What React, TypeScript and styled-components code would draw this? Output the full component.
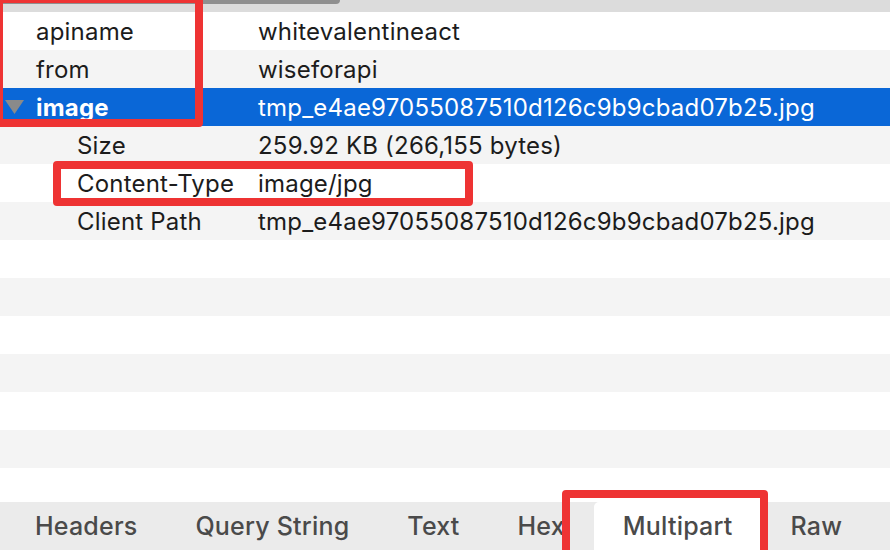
import React from "react";
import styled, { createGlobalStyle } from "styled-components";

const Global = createGlobalStyle`
  html, body { margin: 0; padding: 0; background: #ffffff; }
  body { font-family: Inter, "Noto Sans", "Liberation Sans", sans-serif; }
`;

const Page = styled.div`
  position: relative;
  width: 890px;
  height: 550px;
  overflow: hidden;
  display: flex;
  flex-direction: column;
  background: #ffffff;
`;

const TopStrip = styled.div`
  height: 12px;
  flex: none;
  background: #dcdcdc;
  display: flex;
  align-items: flex-start;
`;

const ScrollThumb = styled.div`
  width: 340px;
  height: 4px;
  background: #8f8f8f;
  border-bottom-right-radius: 4px;
`;

const Table = styled.div`
  flex: 1;
  display: flex;
  flex-direction: column;
`;

const Row = styled.div<{ $stripe?: boolean; $selected?: boolean }>`
  height: 38px;
  flex: none;
  display: grid;
  grid-template-columns: 258px 1fr;
  align-items: center;
  background: ${(p) => (p.$selected ? "#0a67d7" : p.$stripe ? "#f4f4f4" : "#ffffff")};
  color: ${(p) => (p.$selected ? "#ffffff" : "#1c1c1c")};
  font-size: 24px;
  letter-spacing: 0.2px;
`;

const KeyCell = styled.div<{ $indent: number; $bold?: boolean }>`
  position: relative;
  padding-left: ${(p) => p.$indent}px;
  font-weight: ${(p) => (p.$bold ? 700 : 400)};
  white-space: nowrap;
`;

const ValueCell = styled.div`
  white-space: nowrap;
`;

const Disclosure = styled.svg`
  position: absolute;
  left: 5px;
  top: 50%;
  margin-top: -8px;
`;

const Filler = styled.div<{ $stripe?: boolean }>`
  height: 38px;
  flex: none;
  background: ${(p) => (p.$stripe ? "#f4f4f4" : "#ffffff")};
`;

const TabBar = styled.div`
  height: 48px;
  flex: none;
  margin-top: auto;
  background: #ebebeb;
  display: flex;
  align-items: stretch;
  padding-left: 6px;
`;

const Tab = styled.div<{ $active?: boolean }>`
  padding: 0 29px;
  display: flex;
  align-items: center;
  font-size: 25px;
  font-weight: 500;
  letter-spacing: 0.2px;
  color: #4a4a4a;
  background: ${(p) => (p.$active ? "#ffffff" : "transparent")};
  border-top-left-radius: ${(p) => (p.$active ? "5px" : "0")};
  white-space: nowrap;
`;

const Annotation = styled.div<{ $x: number; $y: number; $w: number; $h: number }>`
  position: absolute;
  left: ${(p) => p.$x}px;
  top: ${(p) => p.$y}px;
  width: ${(p) => p.$w}px;
  height: ${(p) => p.$h}px;
  box-sizing: border-box;
  border: 8px solid #ee3333;
  border-radius: 4px;
  pointer-events: none;
`;

type Item = { key: string; value: string; indent: number; bold?: boolean; selected?: boolean; toggle?: boolean };

const items: Item[] = [
  { key: "apiname", value: "whitevalentineact", indent: 36 },
  { key: "from", value: "wiseforapi", indent: 36 },
  { key: "image", value: "tmp_e4ae97055087510d126c9b9cbad07b25.jpg", indent: 36, bold: true, selected: true, toggle: true },
  { key: "Size", value: "259.92 KB (266,155 bytes)", indent: 77 },
  { key: "Content-Type", value: "image/jpg", indent: 77 },
  { key: "Client Path", value: "tmp_e4ae97055087510d126c9b9cbad07b25.jpg", indent: 77 },
];

const tabs = ["Headers", "Query String", "Text", "Hex", "Multipart", "Raw"];

export default function App() {
  return (
    <>
      <Global />
      <Page>
        <TopStrip>
          <ScrollThumb />
        </TopStrip>
        <Table>
          {items.map((it, i) => (
            <Row key={it.key} $stripe={i % 2 === 1} $selected={it.selected}>
              <KeyCell $indent={it.indent} $bold={it.bold}>
                {it.toggle && (
                  <Disclosure width="19" height="16" viewBox="0 0 19 16">
                    <polygon points="0,1 19,1 9.5,15" fill="#8a8a8a" />
                  </Disclosure>
                )}
                {it.key}
              </KeyCell>
              <ValueCell>{it.value}</ValueCell>
            </Row>
          ))}
          {Array.from({ length: 6 }).map((_, i) => (
            <Filler key={i} $stripe={i % 2 === 1} />
          ))}
        </Table>
        <TabBar>
          {tabs.map((t) => (
            <Tab key={t} $active={t === "Multipart"}>
              {t}
            </Tab>
          ))}
        </TabBar>
        <Annotation $x={-5} $y={-5} $w={208} $h={132} />
        <Annotation $x={53} $y={161} $w={420} $h={45} />
        <Annotation $x={562} $y={490} $w={206} $h={70} />
      </Page>
    </>
  );
}
